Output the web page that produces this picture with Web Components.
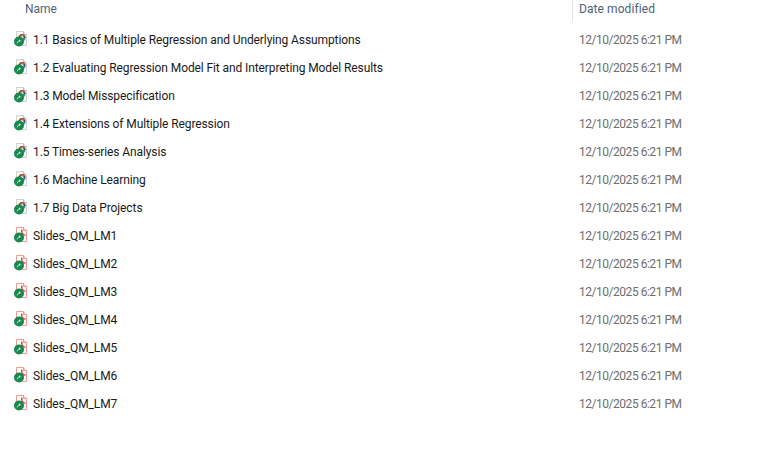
<!DOCTYPE html>
<html>
<head>
<meta charset="utf-8">
<style>
  html, body { margin: 0; background: white; }
  body { font-family: Roboto, "Noto Sans", sans-serif; font-size: 12px; }
</style>
</head>
<body>
<file-list>
  <file-row kind="shortcut" name="1.1 Basics of Multiple Regression and Underlying Assumptions"></file-row>
  <file-row kind="shortcut" name="1.2 Evaluating Regression Model Fit and Interpreting Model Results"></file-row>
  <file-row kind="shortcut" name="1.3 Model Misspecification"></file-row>
  <file-row kind="shortcut" name="1.4 Extensions of Multiple Regression"></file-row>
  <file-row kind="shortcut" name="1.5 Times-series Analysis"></file-row>
  <file-row kind="shortcut" name="1.6 Machine Learning"></file-row>
  <file-row kind="shortcut" name="1.7 Big Data Projects"></file-row>
  <file-row kind="pdf" name="Slides_QM_LM1"></file-row>
  <file-row kind="pdf" name="Slides_QM_LM2"></file-row>
  <file-row kind="pdf" name="Slides_QM_LM3"></file-row>
  <file-row kind="pdf" name="Slides_QM_LM4"></file-row>
  <file-row kind="pdf" name="Slides_QM_LM5"></file-row>
  <file-row kind="pdf" name="Slides_QM_LM6"></file-row>
  <file-row kind="pdf" name="Slides_QM_LM7"></file-row>
</file-list>
<script>
const listTemplate = document.createElement('template');
listTemplate.innerHTML = `
<style>
  :host {
    display: block;
    width: 784px;
    height: 460px;
    overflow: hidden;
    background: white;
  }
  .head {
    display: grid;
    grid-template-columns: 572px 1fr;
    height: 21px;
    margin-bottom: 5px;
    color: #4c607a;
    line-height: 18px;
  }
  .name { padding-left: 25px; }
  .date {
    padding-left: 6px;
    border-left: 1px solid #e5e5e5;
    letter-spacing: 0.08px;
  }
</style>
<div class="head">
  <div class="name">Name</div>
  <div class="date">Date modified</div>
</div>
<slot></slot>
`;

class FileList extends HTMLElement {
    constructor() {
        super();
        this.attachShadow({ mode: 'open' });
        this.shadowRoot.appendChild(listTemplate.content.cloneNode(true));
    }
}

const rowTemplate = document.createElement('template');
rowTemplate.innerHTML = `
<style>
  :host {
    display: grid;
    grid-template-columns: 579px 1fr;
    height: 28px;
    align-items: center;
  }
  .file {
    display: flex;
    align-items: center;
    gap: 4px;
    padding-left: 13px;
    color: #1a1a1a;
    letter-spacing: -0.1px;
  }
  svg { display: block; flex: none; margin-top: -2px; }
  .date { color: #6d6d6d; letter-spacing: -0.47px; }
</style>
<div class="file">
  <svg width="16" height="18" viewBox="0 0 16 18"></svg>
  <span class="label"></span>
</div>
<div class="date">12/10/2025 6:21 PM</div>
`;

const badge = `<circle cx="6" cy="11.500" r="5" fill="#17894f"/><path d="M4.300 13.300c.2-1.500 1-2.300 2.500-2.500" fill="none" stroke="#d5eee0"/><path d="M6 9.200l2 1.500-2 1.400z" fill="#d5eee0"/>`;
const icons = {
    shortcut: `<path d="M3.500 1.500h7l3 3v11h-10z" fill="#fff" stroke="#cfcfcf"/><path d="M10.500 1.500v3h3" fill="#eee" stroke="#bdbdbd"/><circle cx="9" cy="7.500" r="3.500" fill="#3d3f5c"/><path d="M6 6a3.500 3.500 0 0 1 6-.3l-2 1.500a1.500 1.500 0 0 0-2.300 0z" fill="#c4622a"/><path d="M12.400 7.500a3.500 3.500 0 0 1-1.500 3l-1-1.800z" fill="#4b9bd0"/><circle cx="9" cy="7.500" r="1.500" fill="#eee6df"/>` + badge,
    pdf: `<path d="M3.500 1.500h7l3 3v11h-10z" fill="#fff" stroke="#ef9a94"/><path d="M10.500 1.500v3h3" fill="#fde7e5" stroke="#ef9a94"/><path d="M6 10.500c2.300-1.300 3.500-3.800 2.800-6.500-1 1.300.4 4.800 3.700 5.200-2-.5-4.500 0-6.500 1.300z" fill="none" stroke="#e5322b" stroke-width="1.100"/>` + badge,
};

class FileRow extends HTMLElement {
    constructor() {
        super();
        this.attachShadow({ mode: 'open' });
        this.shadowRoot.appendChild(rowTemplate.content.cloneNode(true));
    }

    connectedCallback() {
        this.shadowRoot.querySelector('svg').innerHTML = icons[this.getAttribute('kind')];
        this.shadowRoot.querySelector('.label').textContent = this.getAttribute('name');
    }
}

customElements.define('file-list', FileList);
customElements.define('file-row', FileRow);
</script>
</body>
</html>
